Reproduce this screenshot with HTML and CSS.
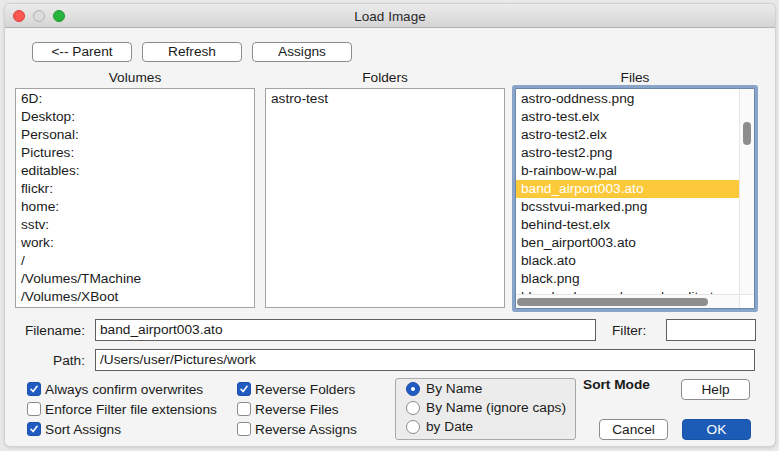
FILE: index.html
```html
<!DOCTYPE html>
<html>
<head>
<meta charset="utf-8">
<title>Load Image</title>
<link rel="stylesheet" href="styles.css">
</head>
<body>
<div class="window">
  <div class="titlebar">
    <div class="lights">
      <span class="light red"></span>
      <span class="light gray"></span>
      <span class="light green"></span>
    </div>
    <div class="title">Load Image</div>
  </div>
  <div class="content">
    <div class="toolbar">
      <button class="btn">&lt;-- Parent</button>
      <button class="btn">Refresh</button>
      <button class="btn">Assigns</button>
    </div>
    <div class="columns">
      <div class="col">
        <div class="col-label">Volumes</div>
        <div class="list">
          <div class="row">6D:</div>
          <div class="row">Desktop:</div>
          <div class="row">Personal:</div>
          <div class="row">Pictures:</div>
          <div class="row">editables:</div>
          <div class="row">flickr:</div>
          <div class="row">home:</div>
          <div class="row">sstv:</div>
          <div class="row">work:</div>
          <div class="row">/</div>
          <div class="row">/Volumes/TMachine</div>
          <div class="row">/Volumes/XBoot</div>
        </div>
      </div>
      <div class="col">
        <div class="col-label">Folders</div>
        <div class="list">
          <div class="row">astro-test</div>
        </div>
      </div>
      <div class="col">
        <div class="col-label">Files</div>
        <div class="list focused">
          <div class="scroll-area">
            <div class="rows">
              <div class="row">astro-oddness.png</div>
              <div class="row">astro-test.elx</div>
              <div class="row">astro-test2.elx</div>
              <div class="row">astro-test2.png</div>
              <div class="row">b-rainbow-w.pal</div>
              <div class="row selected">band_airport003.ato</div>
              <div class="row">bcsstvui-marked.png</div>
              <div class="row">behind-test.elx</div>
              <div class="row">ben_airport003.ato</div>
              <div class="row">black.ato</div>
              <div class="row">black.png</div>
              <div class="row">blue-background-sample-edit.ato</div>
            </div>
            <div class="vscroll"><div class="vthumb"></div></div>
          </div>
          <div class="hscroll-row">
            <div class="hscroll"><div class="hthumb"></div></div>
            <div class="corner"></div>
          </div>
        </div>
      </div>
    </div>
    <div class="field-row">
      <label class="field-label">Filename:</label>
      <div class="input wide">band_airport003.ato</div>
      <label class="filter-label">Filter:</label>
      <div class="input filter"></div>
    </div>
    <div class="field-row path-row">
      <label class="field-label">Path:</label>
      <div class="input full">/Users/user/Pictures/work</div>
    </div>
    <div class="bottom">
      <div class="checks">
        <div class="check"><span class="box on"><svg viewBox="0 0 14 14"><path d="M3.5 7.3 L6 10 L10.6 3.8" /></svg></span>Always confirm overwrites</div>
        <div class="check"><span class="box"></span>Enforce Filter file extensions</div>
        <div class="check"><span class="box on"><svg viewBox="0 0 14 14"><path d="M3.5 7.3 L6 10 L10.6 3.8" /></svg></span>Sort Assigns</div>
      </div>
      <div class="checks col2">
        <div class="check"><span class="box on"><svg viewBox="0 0 14 14"><path d="M3.5 7.3 L6 10 L10.6 3.8" /></svg></span>Reverse Folders</div>
        <div class="check"><span class="box"></span>Reverse Files</div>
        <div class="check"><span class="box"></span>Reverse Assigns</div>
      </div>
      <div class="radio-group">
        <div class="radio"><span class="circle on"></span>By Name</div>
        <div class="radio"><span class="circle"></span>By Name (ignore caps)</div>
        <div class="radio"><span class="circle"></span>by Date</div>
      </div>
      <div class="sort-mode">Sort Mode</div>
      <div class="actions">
        <button class="btn small help">Help</button>
        <div class="action-row">
          <button class="btn small">Cancel</button>
          <button class="btn small primary">OK</button>
        </div>
      </div>
    </div>
  </div>
</div>
</body>
</html>
```

FILE: styles.css
```css
* { box-sizing: border-box; }

html, body {
  margin: 0;
  padding: 0;
}

body {
  width: 779px;
  height: 451px;
  background: #e9e9e9;
  padding: 4px 5px 0 5px;
  font-family: "Liberation Sans", Arial, sans-serif;
  font-size: 13.7px;
  color: #1a1a1a;
  overflow: hidden;
}

.window {
  width: 770px;
  height: 442px;
  background: #f4f4f4;
  border-radius: 5px;
  box-shadow: 0 0 0 1px #d2d2d2, 0 1px 4px rgba(0,0,0,0.18);
  overflow: hidden;
  display: flex;
  flex-direction: column;
}

.titlebar {
  height: 24px;
  flex: none;
  background: linear-gradient(#ebebeb, #d5d5d5);
  border-bottom: 1px solid #b2b2b2;
  display: flex;
  align-items: center;
  position: relative;
}

.lights {
  display: flex;
  gap: 8px;
  padding-left: 8px;
  padding-top: 1px;
}

.light {
  width: 12px;
  height: 12px;
  border-radius: 50%;
  display: block;
}
.light.red { background: #fc5753; border: 1px solid #df3d3a; }
.light.gray { border: 1px solid #b4b4b4; background: radial-gradient(circle, #dcdcdc 55%, #cfcfcf 100%); }
.light.green { background: #27b43d; border: 1px solid #1f9a31; }

.title {
  position: absolute;
  left: 0;
  right: 0;
  top: 0;
  bottom: 0;
  display: flex;
  align-items: center;
  justify-content: center;
  color: #2a2a2a;
  font-size: 13.5px;
  pointer-events: none;
  padding-top: 1px;
}

.content {
  padding: 14px 10px 0 10px;
  display: flex;
  flex-direction: column;
}

.toolbar {
  display: flex;
  gap: 10px;
  padding-left: 17px;
}

.btn {
  font-family: inherit;
  font-size: 13.7px;
  color: #1a1a1a;
  background: #ffffff;
  border: 1px solid #8c8c8c;
  border-radius: 4px;
  width: 100px;
  height: 20px;
  padding: 0;
  line-height: 18px;
}

.columns {
  display: flex;
  gap: 10px;
  margin-top: 8px;
}

.col {
  width: 240px;
  display: flex;
  flex-direction: column;
}

.col-label {
  height: 16px;
  line-height: 16px;
  text-align: center;
  margin-bottom: 2px;
}

.list {
  height: 220px;
  background: #ffffff;
  border: 1px solid #a3a3a3;
  padding-top: 1px;
  overflow: hidden;
}

.row {
  height: 18px;
  line-height: 18px;
  padding-left: 5px;
  white-space: nowrap;
}

.list.focused {
  border: 1px solid #6e86a8;
  border-radius: 1px;
  box-shadow: 0 0 0 3px #88a4c9;
  padding-top: 0;
  display: flex;
  flex-direction: column;
  height: 221px;
}

.scroll-area {
  flex: 1;
  display: flex;
  overflow: hidden;
  min-height: 0;
}

.rows {
  flex: 1;
  padding-top: 1px;
  overflow: hidden;
}

.row.selected {
  background: #fbc939;
  color: #ffffff;
}

.vscroll {
  width: 15px;
  flex: none;
  background: #fafafa;
  border-left: 1px solid #e6e6e6;
  padding: 33px 0 0 3px;
}

.vthumb {
  width: 8px;
  height: 23px;
  border-radius: 4px;
  background: #8e8e8e;
}

.hscroll-row {
  height: 14px;
  flex: none;
  display: flex;
  border-top: 1px solid #e6e6e6;
}

.hscroll {
  flex: 1;
  background: #fafafa;
  padding: 3px 0 0 1px;
}

.hthumb {
  width: 191px;
  height: 8px;
  border-radius: 4px;
  background: #8e8e8e;
}

.corner {
  width: 15px;
  background: #ffffff;
  border-left: 1px solid #e6e6e6;
}

.field-row {
  display: flex;
  align-items: center;
  margin-top: 10px;
  height: 22px;
}

.path-row {
  margin-top: 8px;
}

.field-label {
  width: 70px;
  text-align: right;
  margin-right: 10px;
}

.input {
  height: 22px;
  line-height: 20px;
  background: #ffffff;
  border: 1px solid #5f5f5f;
  padding-left: 4px;
  white-space: nowrap;
}

.input.wide { width: 501px; }
.input.full { width: 660px; }

.filter-label {
  margin-left: 16px;
  width: 54px;
}

.input.filter { width: 90px; }

.bottom {
  display: flex;
  margin-top: 7px;
  height: 62px;
}

.checks {
  display: flex;
  flex-direction: column;
  padding-left: 12px;
  padding-top: 1px;
  width: 222px;
}

.checks.col2 {
  padding-left: 0;
  width: 158px;
}

.check {
  height: 20px;
  display: flex;
  align-items: center;
  white-space: nowrap;
}

.box {
  width: 14px;
  height: 14px;
  border-radius: 3px;
  border: 1px solid #8a8a8a;
  background: #ffffff;
  margin-right: 4px;
  flex: none;
  display: block;
}

.box.on {
  background: #1f5bc0;
  border-color: #1b4fa8;
}

.box svg {
  width: 12px;
  height: 12px;
  display: block;
  fill: none;
  stroke: #ffffff;
  stroke-width: 1.8;
  stroke-linecap: round;
  stroke-linejoin: round;
}

.radio-group {
  width: 181px;
  height: 62px;
  background: #ececec;
  border: 1px solid #a9a9a9;
  border-radius: 3px;
  padding: 0 0 0 10px;
  display: flex;
  flex-direction: column;
}

.radio {
  height: 19px;
  display: flex;
  align-items: center;
  white-space: nowrap;
}

.circle {
  width: 14px;
  height: 14px;
  border-radius: 50%;
  border: 1px solid #8a8a8a;
  background: #ffffff;
  margin-right: 6px;
  flex: none;
  display: block;
  position: relative;
}

.circle.on {
  background: #1f5bc0;
  border-color: #1b4fa8;
}

.circle.on::after {
  content: "";
  position: absolute;
  left: 4px;
  top: 4px;
  width: 4px;
  height: 4px;
  border-radius: 50%;
  background: #ffffff;
}

.sort-mode {
  font-weight: bold;
  margin-left: 7px;
  width: 90px;
  padding-top: 1px;
  line-height: 12px;
  height: 14px;
  white-space: nowrap;
}

.actions {
  display: flex;
  flex-direction: column;
  align-items: flex-start;
  width: 69px;
  margin-left: 8px;
}

.btn.small {
  width: 69px;
  height: 21px;
  flex: none;
}

.btn.help {
  margin-top: 1px;
}

.action-row {
  display: flex;
  gap: 14px;
  margin-top: 19px;
  margin-left: -82px;
}

.btn.primary {
  background: #1d5cb6;
  border-color: #1a54a6;
  color: #ffffff;
}
```
